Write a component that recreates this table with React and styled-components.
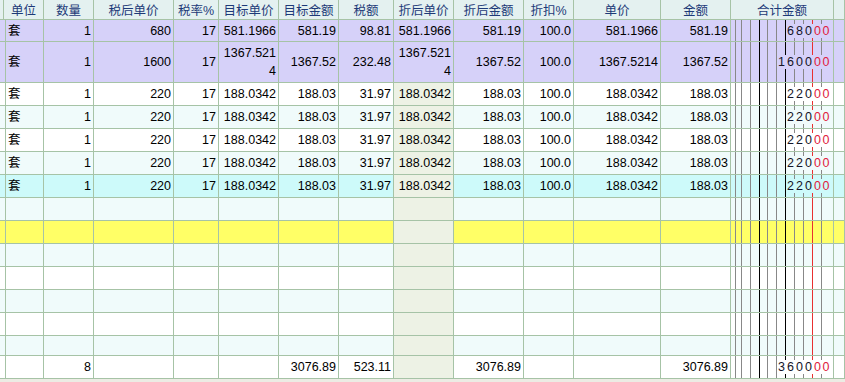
import React from 'react';
import styled, { createGlobalStyle } from 'styled-components';

const Global = createGlobalStyle`
  html, body { margin: 0; padding: 0; background: #ecece4; }
  body { font-family: "Liberation Sans", Arial, "Noto Sans CJK SC", sans-serif; font-size: 12px; }
  * { box-sizing: border-box; }
`;

const COLS = '4px 40px 50px 80px 45px 60px 60px 55px 60px 70px 50px 87px 70px 103px 1fr';
const LINE = '#a6c3a6';
const LAV = '#d6d1f9';
const ALT = '#f0fbfb';
const WHITE = '#ffffff';
const YELLOW = '#ffff66';
const CYAN = '#cdfafa';
const GREEN = '#edf2e5';

const Sheet = styled.div`
  width: 845px;
  height: 382px;
  overflow: hidden;
  background: #ecece4;
`;

const Row = styled.div`
  display: grid;
  grid-template-columns: ${COLS};
  height: ${(p) => p.$h}px;
  background: ${(p) => p.$bg};
`;

const HeadCell = styled.div`
  display: flex;
  align-items: center;
  justify-content: center;
  border-right: 1px solid ${LINE};
  border-bottom: 1px solid ${LINE};
  background: #e4f1f0;
  color: #1d3a78;
  font-family: "Liberation Sans", "Noto Sans CJK SC", sans-serif;
  font-size: 12.5px;
  white-space: nowrap;
  overflow: hidden;
`;

const Cell = styled.div`
  display: flex;
  align-items: center;
  justify-content: ${(p) => (p.$left ? 'flex-start' : 'flex-end')};
  padding: 0 2px 0 ${(p) => (p.$left ? 4 : 3)}px;
  border-right: 1px solid ${LINE};
  border-bottom: 1px solid ${LINE};
  background: ${(p) => p.$bg || 'transparent'};
  color: #000;
  font-size: 12.5px;
  line-height: 18px;
  overflow: hidden;
`;

const Text = styled.span`
  text-align: right;
  word-break: break-all;
`;

const DigitCell = styled.div`
  display: flex;
  align-items: stretch;
  border-right: 1px solid ${LINE};
  border-bottom: 1px solid ${LINE};
`;

const Digit = styled.div`
  flex: 0 0 ${(p) => p.$w}px;
  display: flex;
  align-items: center;
  padding-right: ${(p) => (p.$last ? 3 : 0)}px;
  background: ${(p) =>
    p.$line ? `linear-gradient(${p.$line}, ${p.$line}) right top / 1px 100% no-repeat` : 'none'};
`;

const Glyph = styled.span`
  display: block;
  width: 100%;
  height: 14px;
  line-height: 14px;
  text-align: center;
  font-size: 12.5px;
  background: ${(p) => p.$bg};
  color: ${(p) => (p.$red ? '#e0203c' : '#141428')};
`;

const WIDTHS = [5, 6, 9, 9, 8, 9, 9, 9, 9, 9, 9, 11];
const LINES = ['#888', '#888', '#888', '#000', '#888', '#888', '#000', '#888', '#888', '#e83030', '#888', null];

function Digits({ value, bg }) {
  const chars = value.split('');
  const offset = WIDTHS.length - chars.length;
  return (
    <DigitCell>
      {WIDTHS.map((w, i) => {
        const ch = i >= offset ? chars[i - offset] : null;
        return (
          <Digit key={i} $w={w} $line={LINES[i]} $last={i === 11}>
            {ch !== null && (
              <Glyph $bg={bg} $red={i >= 10}>
                {ch}
              </Glyph>
            )}
          </Digit>
        );
      })}
    </DigitCell>
  );
}

const HEAD = ['', '单位', '数量', '税后单价', '税率%', '目标单价', '目标金额', '税额', '折后单价', '折后金额', '折扣%', '单价', '金额', '合计金额', ''];

const r1 = ['套', '1', '680', '17', '581.1966', '581.19', '98.81', '581.1966', '581.19', '100.0', '581.1966', '581.19'];
const r2 = ['套', '1', '1600', '17', '1367.5214', '1367.52', '232.48', '1367.5214', '1367.52', '100.0', '1367.5214', '1367.52'];
const r3 = ['套', '1', '220', '17', '188.0342', '188.03', '31.97', '188.0342', '188.03', '100.0', '188.0342', '188.03'];
const empty = ['', '', '', '', '', '', '', '', '', '', '', ''];
const total = ['', '8', '', '', '', '3076.89', '523.11', '', '3076.89', '', '', '3076.89'];

const ROWS = [
  { h: 22, bg: LAV, data: r1, digits: '68000', lav: true },
  { h: 41, bg: LAV, data: r2, digits: '160000', lav: true },
  { h: 23, bg: WHITE, data: r3, digits: '22000' },
  { h: 23, bg: ALT, data: r3, digits: '22000' },
  { h: 23, bg: WHITE, data: r3, digits: '22000' },
  { h: 23, bg: ALT, data: r3, digits: '22000' },
  { h: 23, bg: CYAN, data: r3, digits: '22000' },
  { h: 23, bg: ALT, data: empty, digits: '' },
  { h: 23, bg: YELLOW, data: empty, digits: '' },
  { h: 23, bg: ALT, data: empty, digits: '' },
  { h: 23, bg: WHITE, data: empty, digits: '' },
  { h: 23, bg: ALT, data: empty, digits: '' },
  { h: 23, bg: WHITE, data: empty, digits: '' },
  { h: 20, bg: ALT, data: empty, digits: '' },
  { h: 23, bg: WHITE, data: total, digits: '360000' },
];

export default function App() {
  return (
    <>
      <Global />
      <Sheet>
        <Row $h={20} $bg="#e4f1f0">
          {HEAD.map((h, i) => (
            <HeadCell key={i}>{h}</HeadCell>
          ))}
        </Row>
        {ROWS.map((row, ri) => (
          <Row key={ri} $h={row.h} $bg={row.bg}>
            <Cell />
            {row.data.map((v, ci) => (
              <Cell key={ci} $left={ci === 0} $bg={ci === 7 && !row.lav ? GREEN : undefined}>
                <Text>{v}</Text>
              </Cell>
            ))}
            <Digits value={row.digits} bg={row.bg} />
            <Cell />
          </Row>
        ))}
      </Sheet>
    </>
  );
}
